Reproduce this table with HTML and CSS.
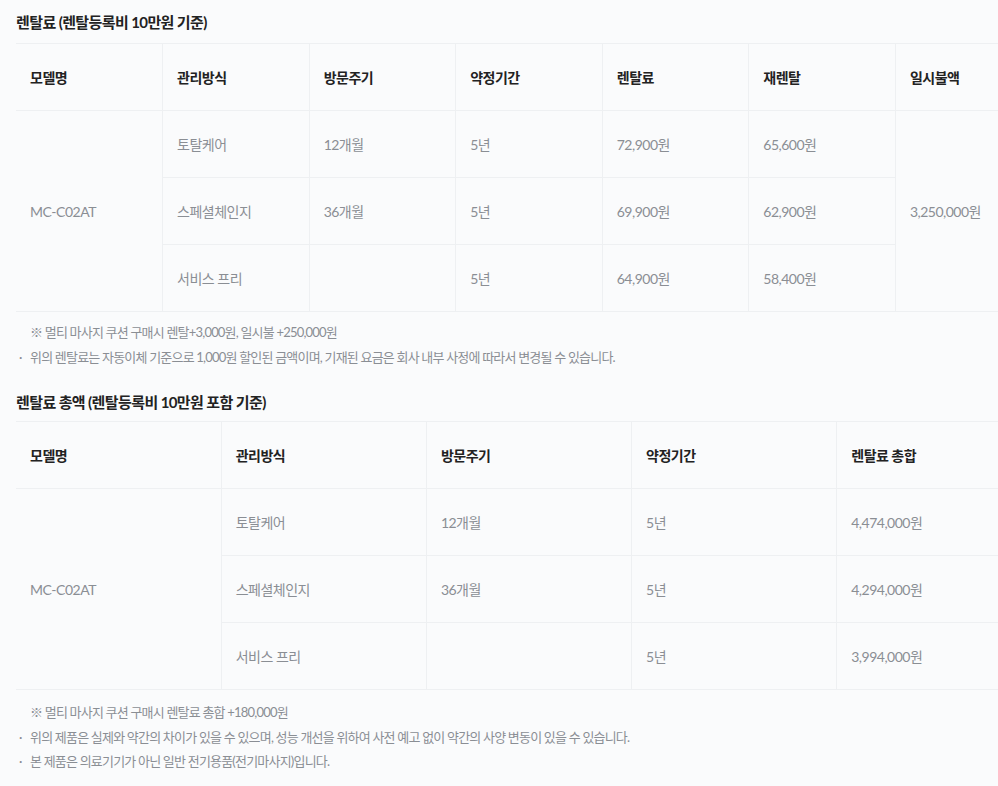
FILE: index.html
```html
<!DOCTYPE html>
<html lang="ko">
<head>
<meta charset="utf-8">
<title>렌탈료</title>
<link rel="stylesheet" href="styles.css">
</head>
<body>
<div class="wrap">
  <h3 class="title first">렌탈료 (렌탈등록비 10만원 기준)</h3>
  <table class="rt seven">
    <thead>
      <tr><th>모델명</th><th>관리방식</th><th>방문주기</th><th>약정기간</th><th>렌탈료</th><th>재렌탈</th><th>일시불액</th></tr>
    </thead>
    <tbody>
      <tr><td rowspan="3">MC-C02AT</td><td>토탈케어</td><td>12개월</td><td>5년</td><td>72,900원</td><td>65,600원</td><td rowspan="3">3,250,000원</td></tr>
      <tr><td>스페셜체인지</td><td>36개월</td><td>5년</td><td>69,900원</td><td>62,900원</td></tr>
      <tr><td>서비스 프리</td><td></td><td>5년</td><td>64,900원</td><td>58,400원</td></tr>
    </tbody>
  </table>
  <ul class="notes n1">
    <li class="ref">※ 멀티 마사지 쿠션 구매시 렌탈+3,000원, 일시불 +250,000원</li>
    <li class="dot"><span class="mk">·</span>위의 렌탈료는 자동이체 기준으로 1,000원 할인된 금액이며, 기재된 요금은 회사 내부 사정에 따라서 변경될 수 있습니다.</li>
  </ul>

  <h3 class="title second">렌탈료 총액 (렌탈등록비 10만원 포함 기준)</h3>
  <table class="rt five">
    <thead>
      <tr><th>모델명</th><th>관리방식</th><th>방문주기</th><th>약정기간</th><th>렌탈료 총합</th></tr>
    </thead>
    <tbody>
      <tr><td rowspan="3">MC-C02AT</td><td>토탈케어</td><td>12개월</td><td>5년</td><td>4,474,000원</td></tr>
      <tr><td>스페셜체인지</td><td>36개월</td><td>5년</td><td>4,294,000원</td></tr>
      <tr><td>서비스 프리</td><td></td><td>5년</td><td>3,994,000원</td></tr>
    </tbody>
  </table>
  <ul class="notes n2">
    <li class="ref">※ 멀티 마사지 쿠션 구매시 렌탈료 총합 +180,000원</li>
    <li class="dot"><span class="mk">·</span>위의 제품은 실제와 약간의 차이가 있을 수 있으며, 성능 개선을 위하여 사전 예고 없이 약간의 사양 변동이 있을 수 있습니다.</li>
    <li class="dot"><span class="mk">·</span>본 제품은 의료기기가 아닌 일반 전기용품(전기마사지)입니다.</li>
  </ul>
</div>
</body>
</html>
```

FILE: styles.css
```css
html { overflow: hidden; background: #fafbfc; }
body {
  margin: 0;
  padding: 0 0 0 16px;
  background: #fafbfc;
  font-family: Lato, "Noto Sans CJK KR", sans-serif;
  color: #8a8e94;
}
.wrap { width: 1026px; }
.title {
  margin: 0;
  font-size: 15px;
  line-height: 20px;
  font-weight: 700;
  color: #222;
  letter-spacing: -0.6px;
}
.title.first { padding-top: 12px; margin-bottom: 11px; }
.title.second { margin-top: 22px; margin-bottom: 9px; }
.rt {
  width: 1026px;
  table-layout: fixed;
  border-collapse: collapse;
  font-size: 14px;
  letter-spacing: -0.5px;
}
.rt th, .rt td {
  height: 67px;
  padding: 0 14px;
  text-align: left;
  vertical-align: middle;
  border-top: 1px solid #eef0f2;
  border-bottom: 1px solid #eef0f2;
  border-left: 1px solid #eef0f2;
  box-sizing: border-box;
}
.rt th { color: #222; font-weight: 700; }
.rt td { color: #8a8e94; font-weight: 400; }
.rt tr > :first-child { border-left: none; }
.rt tbody tr:not(:first-child) > :first-child { border-left: 1px solid #eef0f2; }
.notes {
  list-style: none;
  margin: 0;
  padding: 9px 0 0 0;
  font-size: 13px;
  line-height: 25px;
  letter-spacing: -0.8px;
  color: #8a8e94;
}
.notes.n1 { padding-top: 8px; }
.notes.n2 { padding-top: 10px; line-height: 24.5px; }
.notes .ref { padding-left: 14px; }
.notes .dot { padding-left: 3px; }
.notes .mk { display: inline-block; width: 11px; }
```
